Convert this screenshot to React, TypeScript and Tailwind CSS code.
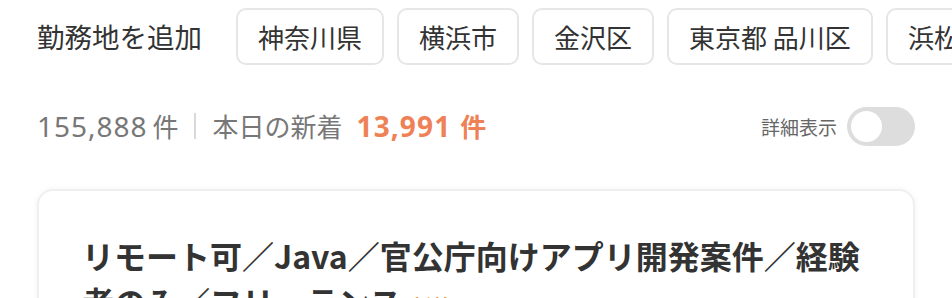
import React from "react";

const chips = ["神奈川県", "横浜市", "金沢区", "東京都 品川区", "浜松市"];

export default function App() {
  return (
    <div
      className="w-[952px] h-[298px] overflow-hidden bg-white"
      style={{ fontFamily: '"Noto Sans CJK JP", "Noto Sans", sans-serif' }}
    >
      <div className="flex items-center pl-[37px] pt-[8px] gap-[13px] overflow-hidden whitespace-nowrap">
        <div className="text-[27.5px] text-[#333] mr-[21px] shrink-0 leading-none">勤務地を追加</div>
        {chips.map((c) => (
          <div
            key={c}
            className="h-[57px] px-[20px] flex items-center border-2 border-[#e6e6e6] rounded-[10px] text-[26px] text-[#333] shrink-0 leading-none"
          >
            {c}
          </div>
        ))}
      </div>

      <div className="flex items-center justify-between px-[37px] mt-[41px] h-[40px]">
        <div className="flex items-center text-[26px] whitespace-nowrap leading-none">
          <span className="text-[#777]">
            <span className="font-['Noto_Sans'] text-[28px] tracking-[0.035em]">155,888</span>
            <span className="ml-[5px]">件</span>
          </span>
          <span className="mx-[16px] w-[2px] h-[26px] bg-[#d9d9d9]" />
          <span className="text-[#777]">本日の新着</span>
          <span className="ml-[14px] text-[#ef8156] font-bold">
            <span className="font-['Noto_Sans'] text-[28px] tracking-[0.04em]">13,991</span>
            <span className="ml-[9px]">件</span>
          </span>
        </div>
        <div className="flex items-center gap-[10px]">
          <span className="text-[19px] text-[#666] leading-none">詳細表示</span>
          <div className="w-[68px] h-[39px] rounded-full bg-[#dddddd] flex items-center px-[4px]">
            <div className="w-[31px] h-[31px] rounded-full bg-white" />
          </div>
        </div>
      </div>

      <div className="mx-[37px] mt-[43px] rounded-[16px] border-2 border-[#efefef] shadow-[0_0_6px_rgba(0,0,0,0.05)] pt-[41px] px-[43px] h-[200px]">
        <div className="text-[32px] font-bold text-[#333] leading-[46px]">
          リモート可／Java／官公庁向けアプリ開発案件／経験者のみ／フリーランス
          <span className="ml-[10px] text-[20px] text-[#f08a24] font-bold">新着</span>
        </div>
      </div>
    </div>
  );
}
